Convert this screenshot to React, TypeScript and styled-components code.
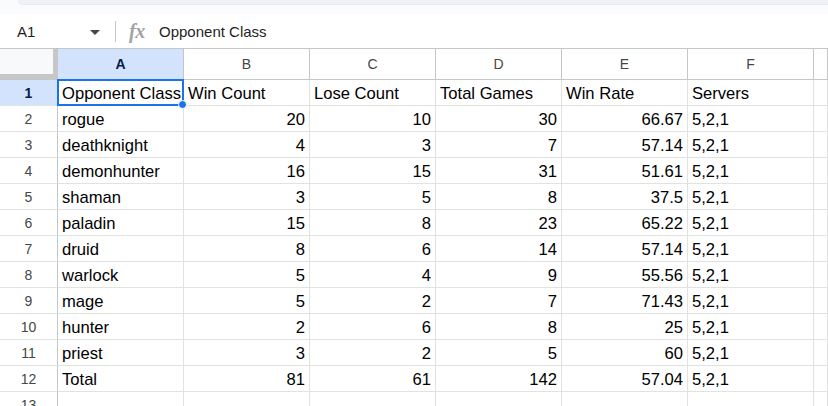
import React from 'react';
import styled, { createGlobalStyle } from 'styled-components';

const GlobalStyle = createGlobalStyle`
  html, body {
    margin: 0;
    padding: 0;
    background: #ffffff;
    overflow: hidden;
  }
  * {
    box-sizing: border-box;
  }
`;

const COLUMNS = ['A', 'B', 'C', 'D', 'E', 'F'];

const ROWS: (string | number)[][] = [
  ['Opponent Class', 'Win Count', 'Lose Count', 'Total Games', 'Win Rate', 'Servers'],
  ['rogue', 20, 10, 30, 66.67, '5,2,1'],
  ['deathknight', 4, 3, 7, 57.14, '5,2,1'],
  ['demonhunter', 16, 15, 31, 51.61, '5,2,1'],
  ['shaman', 3, 5, 8, 37.5, '5,2,1'],
  ['paladin', 15, 8, 23, 65.22, '5,2,1'],
  ['druid', 8, 6, 14, 57.14, '5,2,1'],
  ['warlock', 5, 4, 9, 55.56, '5,2,1'],
  ['mage', 5, 2, 7, 71.43, '5,2,1'],
  ['hunter', 2, 6, 8, 25, '5,2,1'],
  ['priest', 3, 2, 5, 60, '5,2,1'],
  ['Total', 81, 61, 142, 57.04, '5,2,1'],
  ['', '', '', '', '', ''],
];

export default function App() {
  return (
    <>
      <GlobalStyle />
      <Page>
        <TopStrip>
          <TopTab />
        </TopStrip>
        <FormulaBar>
          <NameBox>
            <NameText>A1</NameText>
            <Caret />
          </NameBox>
          <Divider />
          <FxLabel>fx</FxLabel>
          <FormulaText>Opponent Class</FormulaText>
        </FormulaBar>
        <Grid>
          <Corner />
          {COLUMNS.map((col) => (
            <ColHeader key={col} $active={col === 'A'}>
              {col}
            </ColHeader>
          ))}
          <ColHeader $active={false} />

          {ROWS.map((row, r) => (
            <React.Fragment key={r}>
              <RowHeader $active={r === 0}>{r + 1}</RowHeader>
              {row.map((value, c) => (
                <Cell key={c} $numeric={typeof value === 'number'}>
                  {value}
                  {r === 0 && c === 0 && (
                    <Selection>
                      <Handle />
                    </Selection>
                  )}
                </Cell>
              ))}
              <Cell $numeric={false} />
            </React.Fragment>
          ))}
        </Grid>
      </Page>
    </>
  );
}

const Page = styled.div`
  width: 828px;
  height: 406px;
  overflow: hidden;
  display: flex;
  flex-direction: column;
  font-family: 'Liberation Sans', Arial, sans-serif;
  color: #000000;
`;

const TopStrip = styled.div`
  height: 14px;
  flex: none;
  background: #f9fbfd;
  padding-left: 18px;
`;

const TopTab = styled.div`
  height: 5px;
  background: #eef2f8;
  border-bottom: 1px solid #e6ebf2;
  border-left: 1px solid #e6ebf2;
  border-bottom-left-radius: 6px;
`;

const FormulaBar = styled.div`
  height: 35px;
  flex: none;
  display: flex;
  align-items: center;
  border-bottom: 1px solid #c4c7c5;
  background: #ffffff;
`;

const NameBox = styled.div`
  width: 108px;
  display: flex;
  align-items: center;
  justify-content: space-between;
  padding-left: 17px;
  padding-right: 8px;
`;

const NameText = styled.span`
  font-size: 15px;
  color: #1f1f1f;
`;

const Caret = styled.span`
  width: 0;
  height: 0;
  border-left: 5px solid transparent;
  border-right: 5px solid transparent;
  border-top: 5px solid #444746;
  margin-top: 2px;
`;

const Divider = styled.div`
  width: 1px;
  height: 21px;
  margin-left: 7px;
  background: #c4c7c5;
`;

const FxLabel = styled.span`
  margin-left: 13px;
  width: 30px;
  font-family: 'Liberation Serif', 'Times New Roman', serif;
  font-style: italic;
  font-weight: 700;
  font-size: 20px;
  color: #a3a3a3;
  letter-spacing: -0.5px;
`;

const FormulaText = styled.span`
  font-size: 15px;
  color: #1f1f1f;
`;

const Grid = styled.div`
  flex: 1;
  display: grid;
  grid-template-columns: 58px repeat(6, 126px) 1fr;
  grid-template-rows: 31px;
  grid-auto-rows: 26px;
`;

const Corner = styled.div`
  background: #f8f9fa;
  border-right: 5px solid #c7c7c7;
  border-bottom: 6px solid #c7c7c7;
`;

const ColHeader = styled.div<{ $active: boolean }>`
  display: flex;
  align-items: center;
  justify-content: center;
  font-size: 14px;
  background: ${(p) => (p.$active ? '#d3e3fd' : '#ffffff')};
  color: ${(p) => (p.$active ? '#041e49' : '#444746')};
  font-weight: ${(p) => (p.$active ? 700 : 400)};
  border-right: 1px solid #c4c7c5;
  border-bottom: 1px solid #c4c7c5;
`;

const RowHeader = styled.div<{ $active: boolean }>`
  display: flex;
  align-items: center;
  justify-content: center;
  font-size: 14px;
  background: ${(p) => (p.$active ? '#d3e3fd' : '#ffffff')};
  color: ${(p) => (p.$active ? '#041e49' : '#444746')};
  font-weight: ${(p) => (p.$active ? 700 : 400)};
  border-right: 1px solid #c4c7c5;
  border-bottom: 1px solid #e1e3e1;
`;

const Cell = styled.div<{ $numeric: boolean }>`
  position: relative;
  display: flex;
  align-items: flex-end;
  justify-content: ${(p) => (p.$numeric ? 'flex-end' : 'flex-start')};
  padding: 0 4px 1px 4px;
  font-size: 16.6px;
  line-height: 20px;
  white-space: nowrap;
  border-right: 1px solid #e1e3e1;
  border-bottom: 1px solid #e1e3e1;
`;

const Selection = styled.div`
  position: absolute;
  left: -1px;
  top: -1px;
  right: -1px;
  bottom: -1px;
  border: 2px solid #1a73e8;
  z-index: 2;
  pointer-events: none;
`;

const Handle = styled.div`
  position: absolute;
  right: -5px;
  bottom: -5px;
  width: 9px;
  height: 9px;
  border-radius: 50%;
  background: #1a73e8;
  border: 1px solid #ffffff;
`;
